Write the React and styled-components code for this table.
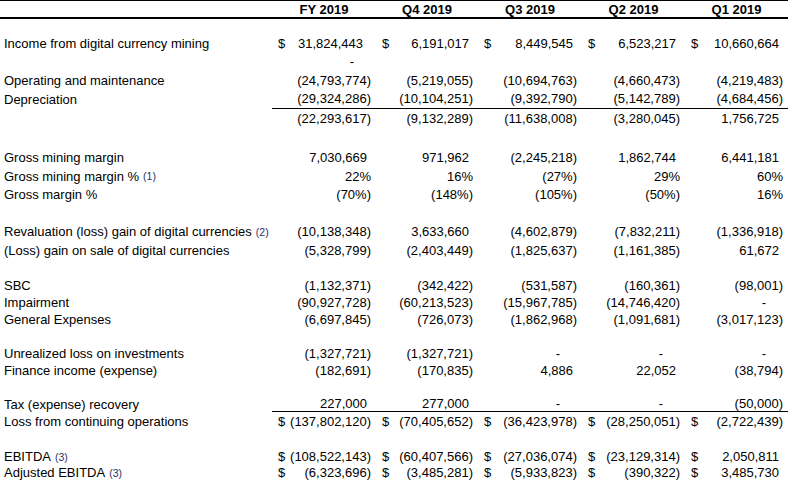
import styled, { createGlobalStyle } from "styled-components";

const GlobalStyle = createGlobalStyle`
  body {
    margin: 0;
    background: #ffffff;
    font-family: "Liberation Sans", Arial, sans-serif;
    font-size: 13px;
    color: #000000;
  }
`;

const COLS = [104, 102, 104, 103, 103];
const HEADS = ["FY 2019", "Q4 2019", "Q3 2019", "Q2 2019", "Q1 2019"];

export const Sheet = styled.div`
  width: 788px;
  border-top: 1px solid #000;
`;

export const HeadRow = styled.div`
  display: flex;
  height: 16px;
  align-items: center;
  border-bottom: 2px solid #000;
  font-weight: bold;
`;

export const Row = styled.div`
  display: flex;
  align-items: stretch;
  height: ${({ h }) => h}px;
`;

export const Label = styled.div`
  width: 272px;
  flex-shrink: 0;
  padding-left: 4px;
  box-sizing: border-box;
  display: flex;
  align-items: center;
  white-space: nowrap;
`;

export const Note = styled.span`
  font-size: 10.5px;
  color: #2e2e66;
  margin-left: 4px;
`;

export const Values = styled.div`
  display: flex;
  flex: 1;
  border-bottom: ${({ rule }) => (rule ? "1px solid #000" : "none")};
`;

export const HeadCell = styled.div`
  width: ${({ w }) => w}px;
  text-align: center;
`;

export const Cell = styled.div`
  width: ${({ w }) => w}px;
  flex-shrink: 0;
  box-sizing: border-box;
  padding: 0 5px 0 6px;
  display: flex;
  align-items: center;
  white-space: nowrap;
`;

export const Dollar = styled.span``;

const pads = { neg: 0, pos: 4, wide: 8, dash: 17, pct: 0 };

export const Num = styled.span`
  margin-left: auto;
  padding-right: ${({ kind }) => pads[kind]}px;
`;

const kindOf = (v) => {
  if (v === "-") return "dash";
  if (v.startsWith("(")) return "neg";
  if (v.endsWith("%")) return "pct";
  return "pos";
};

const rows = [
  { h: 16 },
  { h: 17, label: "Income from digital currency mining", dollar: true, wideFirst: true, vals: ["31,824,443", "6,191,017", "8,449,545", "6,523,217", "10,660,664"] },
  { h: 19, vals: ["-", "", "", "", ""] },
  { h: 18, label: "Operating and maintenance", vals: ["(24,793,774)", "(5,219,055)", "(10,694,763)", "(4,660,473)", "(4,219,483)"] },
  { h: 20, label: "Depreciation", rule: true, vals: ["(29,324,286)", "(10,104,251)", "(9,392,790)", "(5,142,789)", "(4,684,456)"] },
  { h: 18, vals: ["(22,293,617)", "(9,132,289)", "(11,638,008)", "(3,280,045)", "1,756,725"] },
  { h: 21 },
  { h: 18, label: "Gross mining margin", vals: ["7,030,669", "971,962", "(2,245,218)", "1,862,744", "6,441,181"] },
  { h: 20, label: "Gross mining margin %", note: "(1)", vals: ["22%", "16%", "(27%)", "29%", "60%"] },
  { h: 16, label: "Gross margin %", vals: ["(70%)", "(148%)", "(105%)", "(50%)", "16%"] },
  { h: 21 },
  { h: 17, label: "Revaluation (loss) gain of digital currencies", note: "(2)", vals: ["(10,138,348)", "3,633,660", "(4,602,879)", "(7,832,211)", "(1,336,918)"] },
  { h: 20, label: "(Loss) gain on sale of digital currencies", vals: ["(5,328,799)", "(2,403,449)", "(1,825,637)", "(1,161,385)", "61,672"] },
  { h: 16 },
  { h: 18, label: "SBC", vals: ["(1,132,371)", "(342,422)", "(531,587)", "(160,361)", "(98,001)"] },
  { h: 16, label: "Impairment", vals: ["(90,927,728)", "(60,213,523)", "(15,967,785)", "(14,746,420)", "-"] },
  { h: 18, label: "General Expenses", vals: ["(6,697,845)", "(726,073)", "(1,862,968)", "(1,091,681)", "(3,017,123)"] },
  { h: 17 },
  { h: 16, label: "Unrealized loss on investments", vals: ["(1,327,721)", "(1,327,721)", "-", "-", "-"] },
  { h: 18, label: "Finance income (expense)", vals: ["(182,691)", "(170,835)", "4,886", "22,052", "(38,794)"] },
  { h: 17 },
  { h: 16, label: "Tax (expense) recovery", rule: true, vals: ["227,000", "277,000", "-", "-", "(50,000)"] },
  { h: 19, label: "Loss from continuing operations", dollar: true, vals: ["(137,802,120)", "(70,405,652)", "(36,423,978)", "(28,250,051)", "(2,722,439)"] },
  { h: 17 },
  { h: 17, label: "EBITDA", note: "(3)", dollar: true, vals: ["(108,522,143)", "(60,407,566)", "(27,036,074)", "(23,129,314)", "2,050,811"] },
  { h: 15, label: "Adjusted EBITDA", note: "(3)", dollar: true, vals: ["(6,323,696)", "(3,485,281)", "(5,933,823)", "(390,322)", "3,485,730"] },
];

function App() {
  return (
    <>
      <GlobalStyle />
      <Sheet>
        <HeadRow>
          <Label />
          {HEADS.map((t, i) => (
            <HeadCell key={t} w={COLS[i]}>{t}</HeadCell>
          ))}
        </HeadRow>
        {rows.map((r, i) => (
          <Row key={i} h={r.h}>
            <Label>
              {r.label}
              {r.note && <Note>{r.note}</Note>}
            </Label>
            {r.vals && (
              <Values rule={r.rule}>
                {r.vals.map((v, j) => (
                  <Cell key={j} w={COLS[j]}>
                    {r.dollar && <Dollar>$</Dollar>}
                    {v && (
                      <Num kind={r.wideFirst && j === 0 ? "wide" : kindOf(v)}>{v}</Num>
                    )}
                  </Cell>
                ))}
              </Values>
            )}
          </Row>
        ))}
      </Sheet>
    </>
  );
}

export default App;
